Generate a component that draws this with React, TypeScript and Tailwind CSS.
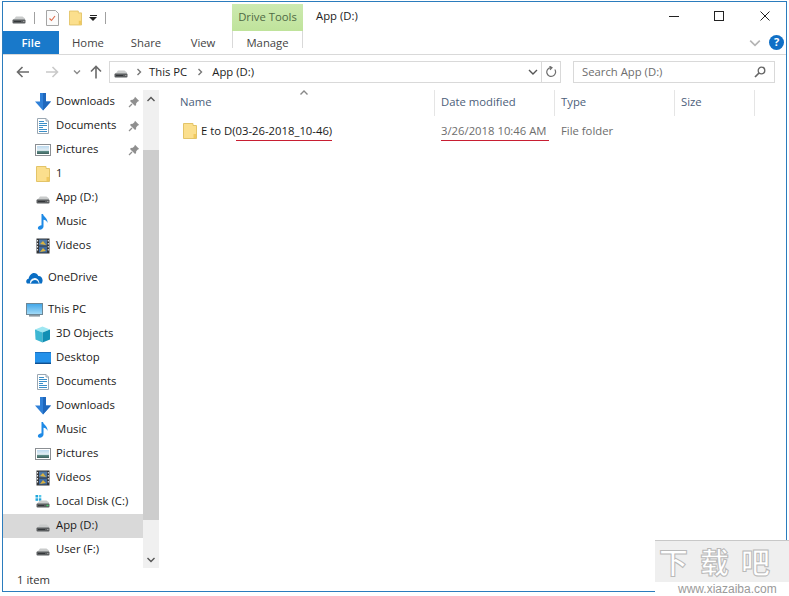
import React from "react";

const Drive = ({ led = "#9a9a9a" }: { led?: string }) => (
  <svg width="16" height="16" viewBox="0 0 16 16" className="block">
    <path d="M3.5 8.5 L5 6.5 H11.5 L14 8.5 V10 H2 V9.5 Z" fill="#c9cbcb" />
    <rect x="1.5" y="9.5" width="13" height="4" rx="1" fill="#5b5e60" />
    <rect x="3" y="11" width="7" height="1" fill="#34373a" />
    <rect x="12" y="11" width="1.5" height="1" fill={led} />
  </svg>
);
const LocalDisk = () => (
  <svg width="16" height="16" viewBox="0 0 16 16" className="block">
    <rect x="0.5" y="1" width="2.5" height="2.5" fill="#22a7dc" />
    <rect x="3.8" y="1" width="2.5" height="2.5" fill="#58c8ea" />
    <rect x="0.5" y="4.3" width="2.5" height="2.5" fill="#22a7dc" />
    <rect x="3.8" y="4.3" width="2.5" height="2.5" fill="#22a7dc" />
    <path d="M3.5 8 L5 6.5 H11.5 L14 8.5 V10 H2 V9.5 Z" fill="#c9cbcb" />
    <rect x="1.5" y="9.5" width="13" height="4" rx="1" fill="#5b5e60" />
    <rect x="3" y="11" width="6" height="1" fill="#34373a" />
    <rect x="11.5" y="10.8" width="2" height="1.4" fill="#45d06a" />
  </svg>
);
const Doc = () => (
  <svg width="16" height="16" viewBox="0 0 16 16" className="block">
    <path d="M2.5 .5 H11 L13.5 3 V15.5 H2.5 Z" fill="#fff" stroke="#9aa7b2" />
    <path d="M11 .5 V3 H13.5" fill="#dfe6ec" stroke="#9aa7b2" />
    <path d="M4 3.5 H9 M4 5.5 H12 M4 7.5 H12 M4 9.5 H8 M4 11.5 H12 M4 13.5 H12" stroke="#3b8fc8" strokeWidth="1" />
  </svg>
);
const Pictures = () => (
  <svg width="16" height="16" viewBox="0 0 16 16" className="block">
    <defs>
      <linearGradient id="picg" x1="0" y1="0" x2="0" y2="1">
        <stop offset="0" stopColor="#bcd9ee" />
        <stop offset="0.55" stopColor="#e4eff5" />
        <stop offset="0.65" stopColor="#5f8f8a" />
        <stop offset="1" stopColor="#3d5f5a" />
      </linearGradient>
    </defs>
    <rect x="0.5" y="2.5" width="15" height="11" fill="#fff" stroke="#8b8f93" />
    <rect x="2" y="4" width="12" height="8" fill="url(#picg)" />
  </svg>
);
const Folder = ({ w = 14, h = 16 }: { w?: number; h?: number }) => (
  <svg width={w} height={h} viewBox="0 0 14 16" className="block">
    <path d="M.5 .5 H10 V2.5 H13.5 V15.5 H.5 Z" fill="#fbdf8d" stroke="#e3c468" />
    <path d="M10.5 11 H13 V15 H10.5 Z" fill="#f1c95f" />
  </svg>
);
const DownArrow = () => (
  <svg width="16" height="18" viewBox="0 0 16 18" className="block">
    <path d="M5 0 H11 V8.5 H16 L8 17.5 L0 8.5 H5 Z" fill="#2f80d8" />
    <path d="M8 0 H11 V8.5 H16 L8 17.5 Z" fill="#1f68bd" />
  </svg>
);
const Music = () => (
  <svg width="16" height="18" viewBox="0 0 16 18" className="block">
    <path d="M6.5 1 H8 C8.5 4 13 5 12.5 10 C12 8 10.5 7 8.5 6.8 V13.5 C8.5 16 5.5 17.3 3.8 16.5 C2 15.5 3 12.6 6.5 12.3 Z" fill="#1e8ae6" />
  </svg>
);
const Videos = () => (
  <svg width="16" height="16" viewBox="0 0 16 16" className="block">
    <rect x="1.5" y="0.5" width="13" height="15" fill="#33363a" />
    <rect x="4" y="1.5" width="8" height="6" fill="#4f79a6" />
    <rect x="4" y="8.5" width="8" height="6" fill="#3f6aa0" />
    <path d="M5 6 L8 3 L11 7 Z M5 14 L8 10 L11 13 Z" fill="#d9b23f" />
    <path d="M2.5 2 V3.5 M2.5 5 V6.5 M2.5 8 V9.5 M2.5 11 V12.5 M13.3 2 V3.5 M13.3 5 V6.5 M13.3 8 V9.5 M13.3 11 V12.5" stroke="#e6e6e6" strokeWidth="1.1" />
  </svg>
);
const OneDrive = () => (
  <svg width="17" height="12" viewBox="0 0 17 12" className="block">
    <path d="M1 11.5 C-.5 10 .2 7 2.6 6.8 C3.2 3.5 5.5 1 8 1 C10 1 11.6 2.2 12.3 4 C14.8 3.8 16.6 6 16.6 8.3 C16.6 10 15.8 11.5 15.8 11.5 Z" fill="#0a6ec4" />
    <path d="M4.2 11.2 C3.5 9 5.5 6.5 8 6.2 C10.5 5.2 13 7.5 13.5 11.2 Z" fill="#fff" opacity="0.95" />
    <path d="M5 11.5 C5 9.5 7 8 9 8 C11 8 12.5 9.5 12.7 11.5 Z" fill="#0a6ec4" />
  </svg>
);
const PC = () => (
  <svg width="17" height="16" viewBox="0 0 17 16" className="block">
    <defs>
      <linearGradient id="pcg" x1="0" y1="0" x2="0" y2="1">
        <stop offset="0" stopColor="#3fa5e8" />
        <stop offset="1" stopColor="#a5dcf8" />
      </linearGradient>
    </defs>
    <rect x="0.5" y="1.5" width="16" height="11" fill="url(#pcg)" stroke="#6d8796" />
    <rect x="3" y="13" width="11" height="1.6" fill="#8b98a1" />
  </svg>
);
const Cube = () => (
  <svg width="17" height="17" viewBox="0 0 17 17" className="block">
    <path d="M8.5 .5 L16 3.5 L8.5 6.5 L1 3.5 Z" fill="#9fe7f2" />
    <path d="M1 3.5 L8.5 6.5 V16.5 L1.5 13.5 Z" fill="#3db7d3" />
    <path d="M16 3.5 L8.5 6.5 V16.5 L16 13.5 Z" fill="#128fb4" />
  </svg>
);
const Desktop = () => (
  <svg width="16" height="12" viewBox="0 0 16 12" className="block">
    <rect x="0" y="0" width="16" height="12" fill="#2391ea" />
    <rect x="0" y="0" width="16" height="1" fill="#1a6fbf" />
    <rect x="0" y="10.6" width="16" height="1.4" fill="#0f4f8f" />
  </svg>
);
const Pin = () => (
  <svg width="12" height="12" viewBox="0 0 12 12" className="block">
    <path d="M7 .8 L11.2 5 L9.8 5.6 L8.2 7.2 L8 9.4 L6.8 9.8 L2.2 5.2 L2.6 4 L4.8 3.8 L6.4 2.2 Z" fill="#8f8f8f" />
    <path d="M4 8 L1 11" stroke="#8f8f8f" strokeWidth="1.3" />
  </svg>
);
const Checklist = () => (
  <svg width="13" height="16" viewBox="0 0 13 16" className="block">
    <path d="M.5 .5 H9.5 L12.5 3.5 V15.5 H.5 Z" fill="#fbfbfb" stroke="#a5a5a5" />
    <path d="M3.5 8.5 L5.5 10.5 L9 6" fill="none" stroke="#dd6a4a" strokeWidth="1.1" />
  </svg>
);
const Chev = ({ d, color = "#666", size = 10 }: { d: string; color?: string; size?: number }) => (
  <svg width={size} height={size} viewBox="0 0 10 10" className="block">
    <path d={d} fill="none" stroke={color} strokeWidth="1.4" />
  </svg>
);
const HArrow = ({ flip = false, color }: { flip?: boolean; color: string }) => (
  <svg width="14" height="12" viewBox="0 0 14 12" className={flip ? "block rotate-180" : "block"}>
    <path d="M13 6 H2 M6.5 1 L1.5 6 L6.5 11" fill="none" stroke={color} strokeWidth="1.6" />
  </svg>
);

type Item = { k: string; label: string; pin?: boolean; level?: number; gap?: boolean; sel?: boolean };
const icons: Record<string, React.ReactNode> = {
  dl: <DownArrow />, doc: <Doc />, pic: <Pictures />, fold: <Folder />, drive: <Drive />,
  music: <Music />, vid: <Videos />, one: <OneDrive />, pc: <PC />, cube: <Cube />, desk: <Desktop />, local: <LocalDisk />,
};
const items: Item[] = [
  { k: "dl", label: "Downloads", pin: true },
  { k: "doc", label: "Documents", pin: true },
  { k: "pic", label: "Pictures", pin: true },
  { k: "fold", label: "1" },
  { k: "drive", label: "App (D:)" },
  { k: "music", label: "Music" },
  { k: "vid", label: "Videos" },
  { k: "one", label: "OneDrive", level: 0, gap: true },
  { k: "pc", label: "This PC", level: 0, gap: true },
  { k: "cube", label: "3D Objects" },
  { k: "desk", label: "Desktop" },
  { k: "doc", label: "Documents" },
  { k: "dl", label: "Downloads" },
  { k: "music", label: "Music" },
  { k: "pic", label: "Pictures" },
  { k: "vid", label: "Videos" },
  { k: "local", label: "Local Disk (C:)" },
  { k: "drive", label: "App (D:)", sel: true },
  { k: "drive", label: "User (F:)" },
];

export default function App() {
  return (
    <div className="relative w-[789px] h-[596px] bg-white overflow-hidden text-[11.3px] text-[#1a1a1a] font-['Open_Sans',sans-serif]">
      <div className="ml-[2px] mt-[1px] w-[785px] h-[591px] border border-[#2b7cbd] flex flex-col bg-white">
        {/* title bar */}
        <div className="h-[29px] flex shrink-0 items-stretch">
          <div className="w-[229px] flex items-center pl-[8px] pt-[3px]">
            <Drive />
            <div className="w-px h-[12px] bg-[#a0a0a0] ml-[7px] mr-[11px]" />
            <Checklist />
            <div className="ml-[10px]"><Folder w={13} h={16} /></div>
            <div className="ml-[7px] flex flex-col items-center gap-[1px] w-[8px]">
              <div className="w-[7px] h-px bg-[#222]" />
              <div className="w-0 h-0 border-l-[4px] border-r-[4px] border-t-[4px] border-l-transparent border-r-transparent border-t-[#222]" />
            </div>
            <div className="w-px h-[12px] bg-[#a0a0a0] ml-[8px]" />
          </div>
          <div className="mt-[2px] w-[71px] bg-gradient-to-b from-[#cdeab0] to-[#bfe39b] text-[#4f6a45] flex items-center justify-center">Drive Tools</div>
          <div className="ml-[13px] pb-[1px] flex items-center text-[#222]">App (D:)</div>
          <div className="ml-auto flex items-center h-[28px]">
            <div className="w-[10px] h-px bg-[#222] mr-[35px]" />
            <div className="w-[10px] h-[10px] border border-[#222] mr-[36px]" />
            <svg width="10" height="10" viewBox="0 0 10 10" className="block mr-[16px]">
              <path d="M.5 .5 L9.5 9.5 M9.5 .5 L.5 9.5" stroke="#222" strokeWidth="1" />
            </svg>
          </div>
        </div>
        {/* tabs */}
        <div className="h-[24px] flex shrink-0 items-stretch border-b border-[#d9d9d9]">
          <div className="w-[56px] pt-[1px] bg-[#1979ca] text-white flex items-center justify-center font-semibold">File</div>
          <div className="w-[58px] pt-[1px] flex items-center justify-center text-[#444]">Home</div>
          <div className="w-[58px] pt-[1px] flex items-center justify-center text-[#444]">Share</div>
          <div className="w-[56px] pt-[1px] flex items-center justify-center text-[#444]">View</div>
          <div className="ml-[1px] w-[71px] h-[17px] pt-[8px] flex items-center justify-center text-[#444] border-l border-r border-[#d9d9d9] overflow-visible">Manage</div>
          <div className="ml-auto flex items-center">
            <Chev d="M1 3 L5 7 L9 3" color="#b5b5b5" size={12} />
            <div className="ml-[8px] mr-[2px] w-[15px] h-[15px] rounded-full bg-[#0f6fc6] text-white flex items-center justify-center font-bold text-[11px]">?</div>
          </div>
        </div>
        {/* address row */}
        <div className="h-[35px] flex shrink-0 items-start pt-[6px]">
          <div className="w-[106px] h-[22px] flex items-center pl-[13px] shrink-0">
            <HArrow color="#6b6b6b" />
            <div className="ml-[15px]"><HArrow flip color="#c9c9c9" /></div>
            <div className="ml-[13px]"><Chev d="M2 3.5 L5 6.5 L8 3.5" color="#8a8a8a" size={10} /></div>
            <svg width="12" height="14" viewBox="0 0 12 14" className="block ml-[8px]">
              <path d="M6 13.5 V2 M1 6.5 L6 1.5 L11 6.5" fill="none" stroke="#6b6b6b" strokeWidth="1.6" />
            </svg>
          </div>
          <div className="w-[452px] h-[22px] border border-[#d9d9d9] flex items-center shrink-0">
            <div className="ml-[3px] mt-[-1px]"><Drive /></div>
            <div className="ml-[5px]"><Chev d="M3.5 2 L6.5 5 L3.5 8" color="#777" size={10} /></div>
            <span className="ml-[5px] text-[#222]">This PC</span>
            <div className="ml-[8px]"><Chev d="M3.5 2 L6.5 5 L3.5 8" color="#777" size={10} /></div>
            <span className="ml-[7px] text-[#222]">App (D:)</span>
            <div className="ml-auto flex items-center h-full">
              <Chev d="M1 3 L5 7 L9 3" color="#555" size={10} />
              <div className="w-px h-full bg-[#d9d9d9] ml-[3px]" />
              <svg width="12" height="12" viewBox="0 0 12 12" className="block mx-[3px]">
                <path d="M9.8 3.5 A4.4 4.4 0 1 1 6 1.6 M4.5 .2 L7 1.7 L5 3.8" fill="none" stroke="#6f6f6f" strokeWidth="1.2" />
              </svg>
            </div>
          </div>
          <div className="ml-[12px] w-[202px] h-[22px] border border-[#d9d9d9] flex items-center pl-[8px] pr-[8px] text-[#6d6d6d] shrink-0">
            <span>Search App (D:)</span>
            <svg width="12" height="12" viewBox="0 0 12 12" className="block ml-auto">
              <circle cx="7.5" cy="4.5" r="3.3" fill="none" stroke="#666" strokeWidth="1.3" />
              <path d="M5 7 L1 11" stroke="#666" strokeWidth="1.7" />
            </svg>
          </div>
        </div>
        {/* main */}
        <div className="flex-1 min-h-0 flex">
          <div className="w-[140px] shrink-0 flex flex-col">
            {items.map((it, i) => {
              const indent = it.level === 0 ? "w-[45px]" : "w-[53px]";
              return (
                <div key={i} className={`${it.gap ? "mt-[8px]" : ""} h-[24px] shrink-0 flex items-center ${it.sel ? "bg-[#d9d9d9]" : ""}`}>
                  <div className={`${indent} shrink-0 h-full flex items-center justify-end pr-[5px]`}>
                    <div className="w-[17px] flex justify-center">{icons[it.k]}</div>
                  </div>
                  <span className="pb-[1px] whitespace-nowrap">{it.label}</span>
                  {it.pin && <div className="ml-auto mr-[3px]"><Pin /></div>}
                </div>
              );
            })}
          </div>
          {/* scrollbar */}
          <div className="w-[16px] h-[478px] shrink-0 bg-[#f0f0f0] flex flex-col">
            <div className="h-[17px] flex items-center justify-center shrink-0"><Chev d="M1.5 7 L5 3.5 L8.5 7" color="#555" size={10} /></div>
            <div className="mt-[43px] h-[370px] bg-[#cdcdcd] shrink-0" />
            <div className="mt-auto h-[17px] flex items-center justify-center shrink-0"><Chev d="M1.5 3 L5 6.5 L8.5 3" color="#555" size={10} /></div>
          </div>
          {/* list */}
          <div className="flex-1 min-w-0 flex flex-col relative">
            <div className="h-[26px] flex shrink-0 text-[#4c607a]">
              <div className="w-[276px] pl-[21px] pb-[2px] flex items-center border-r border-[#e5e5e5] relative">
                Name
                <div className="absolute left-[140px] top-[-2px]"><Chev d="M1.5 6.5 L5 3 L8.5 6.5" color="#888" size={10} /></div>
              </div>
              <div className="w-[120px] pl-[6px] pb-[2px] flex items-center border-r border-[#e5e5e5]">Date modified</div>
              <div className="w-[120px] pl-[6px] pb-[2px] flex items-center border-r border-[#e5e5e5]">Type</div>
              <div className="w-[80px] pl-[6px] pb-[2px] flex items-center border-r border-[#e5e5e5]">Size</div>
            </div>
            <div className="mt-[3px] h-[24px] flex items-center">
              <div className="w-[276px] pl-[24px] flex items-center shrink-0">
                <Folder />
                <div className="ml-[4px] mt-[1px] leading-[18px] whitespace-nowrap">
                  E to D(<span className="inline-block border-b-[1.5px] border-[#c81e32]">03-26-2018_10-46)</span>
                </div>
              </div>
              <div className="w-[120px] pl-[6px] mt-[1px] text-[#6d6d6d] shrink-0">
                <span className="inline-block leading-[18px] border-b-[1.5px] border-[#c81e32] pr-[3px] whitespace-nowrap">3/26/2018 10:46 AM</span>
              </div>
              <div className="pl-[6px] text-[#6d6d6d]">File folder</div>
            </div>
          </div>
        </div>
        {/* status */}
        <div className="h-[21px] shrink-0 flex items-center pl-[14px] text-[#333]">1 item</div>
      </div>
      {/* watermark */}
      <div className="absolute left-[655px] top-[540px] w-[134px] h-[56px] bg-white overflow-hidden border-t border-[#c8c8c8]">
        <div className="absolute left-0 top-0 w-full h-[41px] bg-[#efefef]" />
        <div className="absolute left-[4px] top-0 text-[29px] leading-[40px] font-bold text-white whitespace-nowrap tracking-[12px] [-webkit-text-stroke:1px_#b9b9b9] font-['Noto_Sans_CJK_SC',sans-serif]">下载吧</div>
        <div className="absolute left-[23px] top-[42px] text-[12px] leading-[12px] text-[#9a9a9a] font-['Liberation_Sans',sans-serif]">www.xiazaiba.com</div>
      </div>
    </div>
  );
}
